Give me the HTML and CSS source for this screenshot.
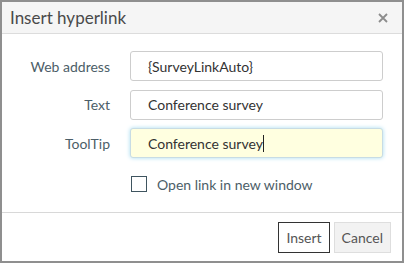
FILE: index.html
```html
<!DOCTYPE html>
<html lang="en">

<head>
    <meta charset="utf-8">
    <title>Insert hyperlink</title>
    <link rel="stylesheet" href="styles.css">
</head>

<body>
    <div class="dialog">
        <header class="titel">
            <h1>Insert hyperlink</h1>
            <!-- luk-kryds -->
            <svg class="luk" width="10" height="10" viewBox="0 0 10 10">
                <path d="M1 1L9 9M9 1L1 9" stroke="#8c8c8c" stroke-width="1.8" />
            </svg>
        </header>

        <section class="indhold">
            <label class="etiket" for="adresse">Web address</label>
            <input id="adresse" class="felt" type="text" value="{SurveyLinkAuto}">

            <label class="etiket" for="tekst">Text</label>
            <input id="tekst" class="felt" type="text" value="Conference survey">

            <label class="etiket" for="tip">ToolTip</label>
            <div class="felt aktiv">Conference survey<span class="markor"></span></div>

            <span></span>
            <label class="afkryds">
                <span class="boks"></span>
                Open link in new window
            </label>
        </section>

        <footer class="knapper">
            <button class="knap primaer">Insert</button>
            <button class="knap">Cancel</button>
        </footer>
    </div>
</body>

</html>
```

FILE: styles.css
```css
body {
    margin: 0;
    font-family: Lato, "Open Sans", sans-serif;
    background: #8f8f8f;
}

.dialog {
    margin: 2px;
    width: 400px;
    height: 259px;
    background: #fff;
    display: flex;
    flex-direction: column;
}

.titel {
    height: 31px;
    flex: none;
    background: #f5f5f5;
    border-bottom: 1px solid #dcdcdc;
    display: flex;
    align-items: center;
    justify-content: space-between;
    padding: 0 14px 0 8px;
}

h1 {
    margin: 0;
    font-size: 17px;
    font-weight: normal;
    color: #4a4a4a;
}

.indhold {
    display: grid;
    grid-template-columns: 108px 253px;
    grid-auto-rows: 30px;
    column-gap: 20px;
    row-gap: 8.5px;
    align-items: center;
    align-content: start;
    padding: 17px 0 0 0;
    height: 178px;
    flex: none;
    box-sizing: border-box;
}

.etiket {
    text-align: right;
    font-size: 14px;
    color: #4c5e68;
}

.felt {
    box-sizing: border-box;
    height: 30px;
    width: 253px;
    border: 1px solid #cdcdcd;
    border-radius: 3px;
    padding: 0 17px;
    font-family: Lato, "Open Sans", sans-serif;
    font-size: 14px;
    color: #333;
    display: flex;
    align-items: center;
    margin: 0;
}

.aktiv {
    background: #ffffe0;
    box-shadow: 0 0 4px #a8dcf0;
    border-color: #c8dce4;
}

.markor {
    display: inline-block;
    width: 1px;
    height: 17px;
    background: #222;
}

.afkryds {
    display: flex;
    align-items: center;
    gap: 10px;
    font-size: 14px;
    color: #4c5e68;
    margin-top: 5px;
}

.boks {
    width: 14px;
    height: 14px;
    border: 1px solid #3f5560;
    margin-left: 1px;
}

.knapper {
    border-top: 1px solid #d8d8d8;
    display: flex;
    justify-content: flex-end;
    align-items: flex-start;
    gap: 4px;
    padding: 9px 11px 0 0;
    flex: 1;
}

.knap {
    height: 31px;
    padding: 0 7px;
    font-family: Lato, "Open Sans", sans-serif;
    font-size: 14px;
    color: #555;
    background: #f2f2f2;
    border: 1px solid #dedede;
}

.primaer {
    background: #fff;
    border-color: #333;
}
```
